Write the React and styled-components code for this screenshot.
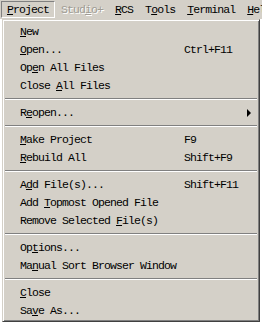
import React from "react";
import styled, { createGlobalStyle } from "styled-components";

const GlobalStyle = createGlobalStyle`
  html, body { margin: 0; padding: 0; background: #ffffff; }
  body { font-family: "Liberation Mono", "DejaVu Sans Mono", monospace; }
`;

const FONT = `
  font-family: "Liberation Mono", "DejaVu Sans Mono", monospace;
  font-size: 11.5px;
  letter-spacing: -0.9px;
  color: #000;
`;

const Screen = styled.div`
  width: 262px;
  height: 325px;
  overflow: hidden;
  position: relative;
`;

const MenuBar = styled.div`
  ${FONT}
  display: flex;
  height: 19px;
  box-sizing: border-box;
  padding: 1px 0 0 1px;
  background: #d4d0c8;
  white-space: nowrap;
`;

const MenuTitle = styled.div`
  box-sizing: border-box;
  height: 17px;
  line-height: 16px;
  padding: 0 5px;
  border: 1px solid;
  border-color: ${(p) =>
    p.$pressed ? "#808080 #ffffff #ffffff #808080" : "transparent"};
  color: ${(p) => (p.$disabled ? "#a09c94" : "#000")};
  text-shadow: ${(p) => (p.$disabled ? "1px 1px 0 #ffffff" : "none")};
`;

const Dropdown = styled.div`
  ${FONT}
  box-sizing: border-box;
  width: 258px;
  margin-left: 2px;
  background: #d4d0c8;
  border: 1px solid;
  border-color: #d4d0c8 #404040 #404040 #d4d0c8;
  box-shadow: inset 1px 1px 0 #ffffff, inset -1px -1px 0 #808080;
  padding: 2px;
`;

const Item = styled.div`
  display: grid;
  grid-template-columns: 164px 1fr;
  align-items: center;
  box-sizing: border-box;
  height: 18px;
  line-height: 17px;
  padding: 1px 0 0 15px;
  white-space: nowrap;
`;

const Shortcut = styled.span`
  display: flex;
  align-items: center;
`;

const Arrow = styled.span`
  margin-left: auto;
  margin-right: 6px;
  width: 0;
  height: 0;
  border-top: 4px solid transparent;
  border-bottom: 4px solid transparent;
  border-left: 4px solid #000;
`;

const Separator = styled.div`
  height: 9px;
  box-sizing: border-box;
  padding-top: 4px;
  &::before {
    content: "";
    display: block;
    height: 1px;
    background: #808080;
    border-bottom: 1px solid #ffffff;
  }
`;

const U = styled.span`
  text-decoration: underline;
  text-underline-offset: 1px;
`;

function Mnemonic({ text, at }) {
  if (at == null || at < 0) return <>{text}</>;
  return (
    <>
      {text.slice(0, at)}
      <U>{text[at]}</U>
      {text.slice(at + 1)}
    </>
  );
}

const titles = [
  { t: "Project", u: 0, pressed: true },
  { t: "Studio+", u: 4, disabled: true },
  { t: "RCS", u: 0 },
  { t: "Tools", u: 1 },
  { t: "Terminal", u: 0 },
  { t: "Help", u: 0 },
];

const entries = [
  { t: "New", u: 0 },
  { t: "Open...", u: 0, k: "Ctrl+F11" },
  { t: "Open All Files", u: 2 },
  { t: "Close All Files", u: 6 },
  "sep",
  { t: "Reopen...", u: 1, sub: true },
  "sep",
  { t: "Make Project", u: 0, k: "F9" },
  { t: "Rebuild All", u: 0, k: "Shift+F9" },
  "sep",
  { t: "Add File(s)...", u: 1, k: "Shift+F11" },
  { t: "Add Topmost Opened File", u: 4 },
  { t: "Remove Selected File(s)", u: 16 },
  "sep",
  { t: "Options...", u: 2 },
  { t: "Manual Sort Browser Window", u: 2 },
  "sep",
  { t: "Close", u: 0 },
  { t: "Save As...", u: 2 },
];

export default function App() {
  return (
    <Screen>
      <GlobalStyle />
      <MenuBar>
        {titles.map((m) => (
          <MenuTitle key={m.t} $pressed={m.pressed} $disabled={m.disabled}>
            <Mnemonic text={m.t} at={m.u} />
          </MenuTitle>
        ))}
      </MenuBar>
      <Dropdown>
        {entries.map((e, i) =>
          e === "sep" ? (
            <Separator key={i} />
          ) : (
            <Item key={i}>
              <span>
                <Mnemonic text={e.t} at={e.u} />
              </span>
              <Shortcut>
                {e.k}
                {e.sub && <Arrow />}
              </Shortcut>
            </Item>
          )
        )}
      </Dropdown>
    </Screen>
  );
}
